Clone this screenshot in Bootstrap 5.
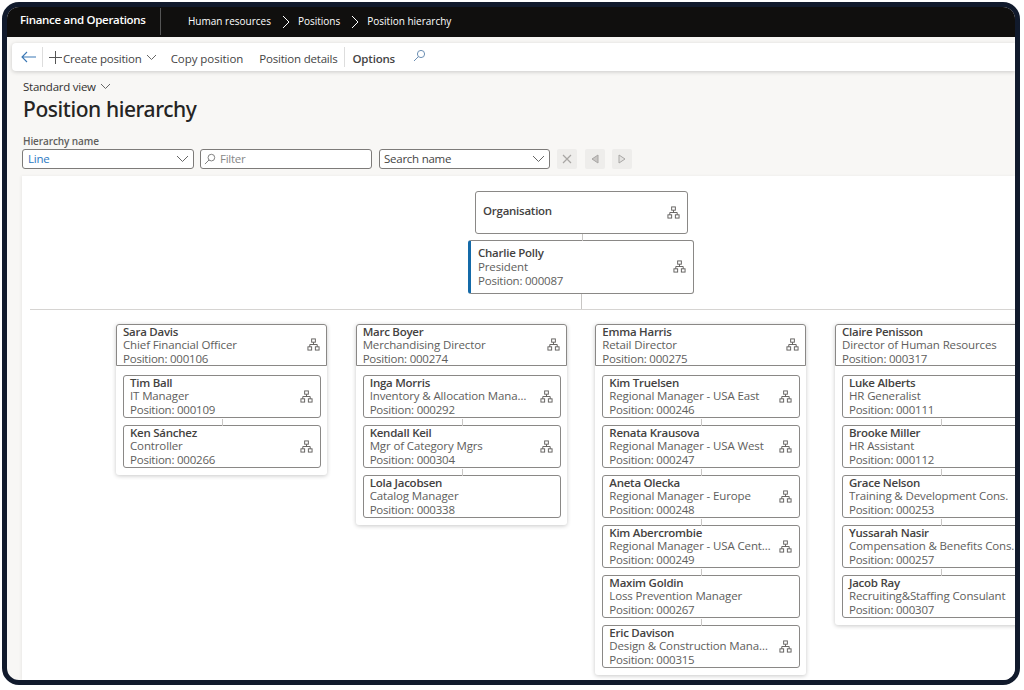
<!DOCTYPE html>
<html lang="en"><head><meta charset="utf-8"><title>Position hierarchy</title>
<link href="https://cdn.jsdelivr.net/npm/bootstrap@5.3.0/dist/css/bootstrap.min.css" rel="stylesheet">
<style>
html,body{height:690px;overflow:hidden;background:#fff}
body{font-family:"Open Sans","Noto Sans",sans-serif;font-size:11px;color:#323130;padding:2px 4px 5px 2px}
.frame{height:683px;border:5px solid #111a2c;border-radius:17px;overflow:hidden;background:#f8f7f5;display:flex;flex-direction:column}
.topbar{height:30px;background:#100f0e;color:#fff;flex:none}
.brand{font-weight:600;font-size:11.5px;letter-spacing:-.3px;width:154px;padding-left:13px;border-right:1px solid #555;height:27px;margin:1px 27px 0 0;line-height:24px;align-self:flex-start}
.crumb{font-size:10px;font-weight:500;margin-top:-1px}
.crumb svg{margin:0 8px 0 11px}
.actionbar{height:28px;margin:6px 0 0 5px;background:#fff;border-radius:4px 0 0 4px;box-shadow:0 1px 4px rgba(0,0,0,.18);flex:none;font-size:11.5px;color:#444;letter-spacing:-.2px}
.actionbar span{padding-top:3px}
.sep{width:1px;height:20px;background:#ddd}
.ic-back{margin:0 6px 0 9px}.ic-plus{margin-left:5px}
.a-copy{margin-left:14px;letter-spacing:-.05px}.a-det{margin-left:16px}.sep2{margin-left:6px}.a-opt{margin-left:8px}.ic-find{margin:-3px 0 0 18px}
.page-head{padding:8px 0 0 15px;height:105px;flex:none}
.view{font-size:11.5px;letter-spacing:-.25px;line-height:15px;margin-left:1px}
.title{font-size:21px;font-weight:500;letter-spacing:-.42px;line-height:28px;color:#252423;font-family:"Noto Sans","Open Sans",sans-serif;margin:1px 0 0 1px}
.fld-label{font-size:10px;font-weight:600;color:#605e5c;margin:12px 0 1px 1px;line-height:13px;letter-spacing:-.1px}
.fields{gap:6px}
.fld{height:20px;border:1px solid #7d7b79;border-radius:3px;background:#fff;font-size:11.5px;letter-spacing:-.25px;padding:0 4px;color:#444}
.f1{width:172px;padding-left:5px;color:#2b78c2}.f2{width:172px;color:#888;padding-left:3px}.f3{width:171px;margin-left:1px}
.mini{width:20px;height:20px;background:#eeedeb;border-radius:2px;margin-left:1px}
.mini2{margin-left:2px}
.canvas{flex:1;margin-left:15px;background:#fff;min-height:0;overflow:hidden;box-shadow:-1px 0 3px rgba(0,0,0,.06);padding-top:15px}
.node{background:#fff;border:1px solid #8a8886;border-radius:3px;padding:0 6px;position:relative;line-height:13.5px;font-size:11.5px;letter-spacing:-.13px;color:#605e5c}
.node b{display:block;font-weight:600;color:#44423f;letter-spacing:-.25px}
.node span{display:block;white-space:nowrap;overflow:hidden;text-overflow:ellipsis;padding-right:22px}
.node:not(:has(svg)) span{padding-right:0}
.node b+span{margin-top:-.5px}
.node b+span+span{margin-top:.5px;letter-spacing:-.22px}
.node svg{position:absolute;right:7px;top:50%;margin-top:-7px}
.org{width:213px;height:43px;margin-left:453px;line-height:38px;color:#44423f;font-weight:600;letter-spacing:-.25px;padding-left:7px}
.pres{width:226px;height:54px;margin:6px 0 0 446px;padding:5px 8px 0 7px;border-left:3px solid #146aa8;line-height:14px}
.link::before{content:"";position:absolute;left:50%;bottom:100%;height:7px;width:1px;background:#c8c6c4}
.org-rule{height:15px;margin-left:559px;width:1px;background:#c8c6c4}
.rule{height:1px;background:#d6d4d2;margin-left:8px}
.cols{display:flex;gap:28.67px;padding:14px 0 0 94px;width:1100px}
.col-box{flex:0 0 211px;width:211px;min-width:0;background:#fff;border-radius:3px;box-shadow:0 1px 4px rgba(0,0,0,.22);align-self:flex-start}
.head{height:42px;border-radius:3px 3px 0 0}
.head svg{right:6px}
.kids{padding:9px 6px 7px 7px;display:flex;flex-direction:column;gap:7px}
.kid{height:43px}
</style></head>
<body>
<svg width="0" height="0" class="position-absolute"><symbol id="o" viewBox="0 0 14 14"><g fill="#fff" stroke="#5f5d5b" stroke-width="1"><rect x="5" y="1" width="4" height="3.5"/><rect x="1" y="9.500" width="4" height="3.500"/><rect x="9" y="9.500" width="4" height="3.500"/><path d="M7 4.500V7M3 9.500V7H11V9.500" fill="none"/></g></symbol></svg>
<div class="frame">
 <div class="topbar d-flex align-items-center">
  <div class="brand">Finance and Operations</div>
  <div class="crumb d-flex align-items-center">Human resources<svg width="8" height="14" viewBox="0 0 8 14"><path d="M1 1l6 6-6 6" fill="none" stroke="#fff"/></svg>Positions<svg width="8" height="14" viewBox="0 0 8 14"><path d="M1 1l6 6-6 6" fill="none" stroke="#fff"/></svg>Position hierarchy</div>
 </div>
 <div class="actionbar d-flex align-items-center">
  <svg class="ic-back" width="15" height="12" viewBox="0 0 15 12"><path d="M6 1L1 6l5 5M1 6h14" fill="none" stroke="#3b78b5" stroke-width="1.100"/></svg>
  <div class="sep"></div>
  <svg class="ic-plus" width="15" height="15" viewBox="0 0 15 15"><path d="M7.500 1v13M1 7.500h13" stroke="#555" stroke-width="1"/></svg>
  <span>Create position</span>
  <svg class="ms-1" width="11" height="7" viewBox="0 0 11 7"><path d="M1 1l4.500 4.500L10 1" fill="none" stroke="#666"/></svg>
  <span class="a-copy">Copy position</span>
  <span class="a-det">Position details</span>
  <div class="sep sep2"></div>
  <span class="fw-semibold a-opt">Options</span>
  <svg class="ic-find" width="13" height="13" viewBox="0 0 13 13"><circle cx="8" cy="5" r="3.600" fill="none" stroke="#6c8fb3"/><path d="M5.500 7.500L1 12" stroke="#6c8fb3"/></svg>
 </div>
 <div class="page-head">
  <div class="view d-flex align-items-center">Standard view<svg class="ms-1" width="11" height="7" viewBox="0 0 11 7"><path d="M1 1l4.500 4.500L10 1" fill="none" stroke="#666"/></svg></div>
  <div class="title">Position hierarchy</div>
  <div class="fld-label">Hierarchy name</div>
  <div class="fields d-flex align-items-center">
   <div class="fld f1 d-flex align-items-center justify-content-between">Line<svg width="13" height="8" viewBox="0 0 13 8"><path d="M1 1l5.500 5.500L12 1" fill="none" stroke="#666"/></svg></div>
   <div class="fld f2 d-flex align-items-center"><svg class="me-1" width="12" height="12" viewBox="0 0 13 13"><circle cx="8" cy="5" r="3.600" fill="none" stroke="#777"/><path d="M5.500 7.500L1 12" stroke="#777"/></svg>Filter</div>
   <div class="fld f3 d-flex align-items-center justify-content-between">Search name<svg width="13" height="8" viewBox="0 0 13 8"><path d="M1 1l5.500 5.500L12 1" fill="none" stroke="#666"/></svg></div>
   <div class="mini d-flex align-items-center justify-content-center"><svg width="10" height="10" viewBox="0 0 10 10"><path d="M1 1l8 8M9 1l-8 8" stroke="#a8a6a4" stroke-width="1.200"/></svg></div>
   <div class="mini mini2 d-flex align-items-center justify-content-center"><svg width="8" height="10" viewBox="0 0 8 10"><path d="M7 1L1 5l6 4z" fill="#c8c6c4" stroke="#a8a6a4"/></svg></div>
   <div class="mini d-flex align-items-center justify-content-center"><svg width="8" height="10" viewBox="0 0 8 10"><path d="M1 1l6 4-6 4z" fill="#e3e2e0" stroke="#a8a6a4"/></svg></div>
  </div>
 </div>
 <div class="canvas">
  <div class="node org">Organisation<svg width="13" height="13"><use href="#o"/></svg></div>
  <div class="node pres link"><b>Charlie Polly</b><span>President</span><span>Position: 000087</span><svg width="13" height="13"><use href="#o"/></svg></div>
  <div class="org-rule"></div>
  <div class="rule"></div>
  <div class="cols">
   <div class="col-box">
    <div class="node head"><b>Sara Davis</b><span>Chief Financial Officer</span><span>Position: 000106</span><svg width="13" height="13"><use href="#o"/></svg></div>
    <div class="kids">
     <div class="node kid"><b>Tim Ball</b><span>IT Manager</span><span>Position: 000109</span><svg width="13" height="13"><use href="#o"/></svg></div>
     <div class="node kid link"><b>Ken Sánchez</b><span>Controller</span><span>Position: 000266</span><svg width="13" height="13"><use href="#o"/></svg></div>
    </div>
   </div>
   <div class="col-box">
    <div class="node head"><b>Marc Boyer</b><span>Merchandising Director</span><span>Position: 000274</span><svg width="13" height="13"><use href="#o"/></svg></div>
    <div class="kids">
     <div class="node kid"><b>Inga Morris</b><span>Inventory &amp; Allocation Manager</span><span>Position: 000292</span><svg width="13" height="13"><use href="#o"/></svg></div>
     <div class="node kid link"><b>Kendall Keil</b><span>Mgr of Category Mgrs</span><span>Position: 000304</span><svg width="13" height="13"><use href="#o"/></svg></div>
     <div class="node kid link"><b>Lola Jacobsen</b><span>Catalog Manager</span><span>Position: 000338</span></div>
    </div>
   </div>
   <div class="col-box">
    <div class="node head"><b>Emma Harris</b><span>Retail Director</span><span>Position: 000275</span><svg width="13" height="13"><use href="#o"/></svg></div>
    <div class="kids">
     <div class="node kid"><b>Kim Truelsen</b><span>Regional Manager - USA East</span><span>Position: 000246</span><svg width="13" height="13"><use href="#o"/></svg></div>
     <div class="node kid link"><b>Renata Krausova</b><span>Regional Manager - USA West</span><span>Position: 000247</span><svg width="13" height="13"><use href="#o"/></svg></div>
     <div class="node kid link"><b>Aneta Olecka</b><span>Regional Manager - Europe</span><span>Position: 000248</span><svg width="13" height="13"><use href="#o"/></svg></div>
     <div class="node kid link"><b>Kim Abercrombie</b><span>Regional Manager - USA Central</span><span>Position: 000249</span><svg width="13" height="13"><use href="#o"/></svg></div>
     <div class="node kid link"><b>Maxim Goldin</b><span>Loss Prevention Manager</span><span>Position: 000267</span></div>
     <div class="node kid link"><b>Eric Davison</b><span>Design &amp; Construction Manager</span><span>Position: 000315</span><svg width="13" height="13"><use href="#o"/></svg></div>
    </div>
   </div>
   <div class="col-box">
    <div class="node head"><b>Claire Penisson</b><span>Director of Human Resources</span><span>Position: 000317</span></div>
    <div class="kids">
     <div class="node kid"><b>Luke Alberts</b><span>HR Generalist</span><span>Position: 000111</span></div>
     <div class="node kid link"><b>Brooke Miller</b><span>HR Assistant</span><span>Position: 000112</span></div>
     <div class="node kid link"><b>Grace Nelson</b><span>Training &amp; Development Cons.</span><span>Position: 000253</span></div>
     <div class="node kid link"><b>Yussarah Nasir</b><span>Compensation &amp; Benefits Cons.</span><span>Position: 000257</span></div>
     <div class="node kid link"><b>Jacob Ray</b><span>Recruiting&amp;Staffing Consulant</span><span>Position: 000307</span></div>
    </div>
   </div>
  </div>
 </div>
</div>
<script src="https://cdn.jsdelivr.net/npm/bootstrap@5.3.0/dist/js/bootstrap.bundle.min.js"></script>
</body></html>
